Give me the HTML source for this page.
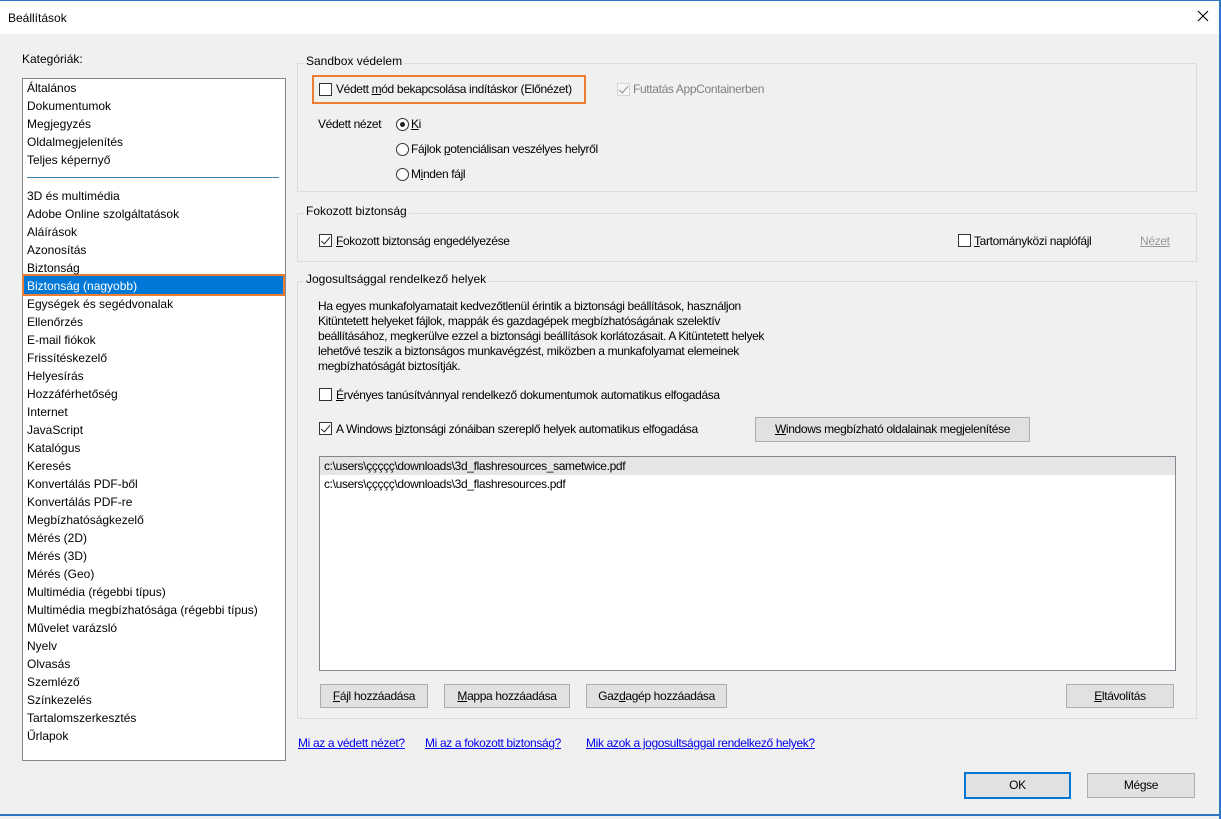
<!DOCTYPE html>
<html><head><meta charset="utf-8"><style>
*{box-sizing:border-box;margin:0;padding:0}
body{width:1221px;height:819px;overflow:hidden;background:#f0f0f0;font-family:"Liberation Sans",sans-serif;font-size:12px;color:#000;position:relative}
.a{position:absolute;white-space:nowrap}
.c{font-size:12px;letter-spacing:-0.35px}
.gb{position:absolute;border:1px solid #dcdcdc}
.gt{position:absolute;background:#f0f0f0;padding:0 2px;top:-10px;left:6px;white-space:nowrap}
.cb{position:absolute;width:13px;height:13px;border:1px solid #333;background:#fff}
.cb.k::after{content:"";position:absolute;left:3px;top:0px;width:4px;height:8px;border:solid #222;border-width:0 1.3px 1.3px 0;transform:rotate(40deg)}
.rb{position:absolute;width:13px;height:13px;border:1px solid #333;border-radius:50%;background:#fff}
.btn{position:absolute;background:#e1e1e1;border:1px solid #adadad;text-align:center;line-height:22px;white-space:nowrap}
.lnk{color:#0000ee;text-decoration:underline}
.li{position:absolute;left:27px;font-size:12px;white-space:nowrap}
</style></head><body>
<div class="a" style="left:0;top:0;width:1221px;height:1px;background:#2b79c2"></div>
<div class="a" style="left:0;top:1px;width:1221px;height:33px;background:#fff"></div>
<div class="a" style="left:8px;top:11px">Beállítások</div>
<svg class="a" style="left:1197px;top:10px" width="12" height="12" viewBox="0 0 12 12"><path d="M1 1L11 11M11 1L1 11" stroke="#000" stroke-width="1.1"/></svg>
<div class="a" style="left:1219px;top:0;width:2px;height:819px;background:#2b79c2"></div>
<div class="a" style="left:0;top:814px;width:1221px;height:2px;background:#2b79c2"></div>

<div class="a" style="left:22px;top:52px">Kategóriák:</div>
<div class="a" style="left:22px;top:78px;width:264px;height:683px;background:#fff;border:1px solid #828790"></div>
<div class="a" style="left:27px;top:177px;width:252px;height:1px;background:#3c7fb1"></div>
<div class="a" style="left:22px;top:274px;width:263px;height:22px;border:2px solid #ed7d31"></div>
<div class="a" style="left:24px;top:276px;width:259px;height:18px;background:#0078d7"></div>

<div class="gb" style="left:297px;top:63px;width:900px;height:129px"><div class="gt">Sandbox védelem</div></div>
<div class="a" style="left:312px;top:75px;width:274px;height:29px;border:2px solid #ed7d31"></div>
<div class="cb" style="left:319px;top:83px"></div>
<div class="a c" style="left:336px;top:82px">Védett <u>m</u>ód bekapcsolása indításkor (Előnézet)</div>
<div class="cb k" style="left:617px;top:83px;border-color:#bbb;opacity:.5"></div>
<div class="a c" style="left:633px;top:82px;color:#808080">Futtatás AppContainerben</div>
<div class="a c" style="left:318px;top:117px">Védett nézet</div>
<div class="rb" style="left:396px;top:118px"><div style="position:absolute;left:3px;top:3px;width:5px;height:5px;border-radius:50%;background:#222"></div></div>
<div class="a c" style="left:411px;top:117px"><u>K</u>i</div>
<div class="rb" style="left:396px;top:143px"></div>
<div class="a c" style="left:411px;top:142px">Fájlok <u>p</u>otenciálisan veszélyes helyről</div>
<div class="rb" style="left:396px;top:168px"></div>
<div class="a c" style="left:411px;top:167px">M<u>i</u>nden fájl</div>

<div class="gb" style="left:297px;top:213px;width:900px;height:49px"><div class="gt">Fokozott biztonság</div></div>
<div class="cb k" style="left:319px;top:234px"></div>
<div class="a c" style="left:336px;top:234px"><u>F</u>okozott biztonság engedélyezése</div>
<div class="cb" style="left:958px;top:234px"></div>
<div class="a c" style="left:974px;top:234px"><u>T</u>artományközi naplófájl</div>
<div class="a c" style="left:1140px;top:234px;color:#999;text-decoration:underline">Nézet</div>

<div class="gb" style="left:297px;top:281px;width:900px;height:438px"><div class="gt">Jogosultsággal rendelkező helyek</div></div>
<div class="a c" style="left:318px;top:299px;line-height:15px">Ha egyes munkafolyamatait kedvezőtlenül érintik a biztonsági beállítások, használjon<br>Kitüntetett helyeket fájlok, mappák és gazdagépek megbízhatóságának szelektív<br>beállításához, megkerülve ezzel a biztonsági beállítások korlátozásait. A Kitüntetett helyek<br>lehetővé teszik a biztonságos munkavégzést, miközben a munkafolyamat elemeinek<br>megbízhatóságát biztosítják.</div>
<div class="cb" style="left:319px;top:388px"></div>
<div class="a c" style="left:336px;top:388px"><u>É</u>rvényes tanúsítvánnyal rendelkező dokumentumok automatikus elfogadása</div>
<div class="cb k" style="left:319px;top:422px"></div>
<div class="a c" style="left:336px;top:422px">A Windows <u>b</u>iztonsági zónáiban szereplő helyek automatikus elfogadása</div>
<div class="btn c" style="left:755px;top:417px;width:275px;height:25px"><u>W</u>indows megbízható oldalainak megjelenítése</div>
<div class="a" style="left:319px;top:456px;width:857px;height:215px;background:#fff;border:1px solid #828790"></div>
<div class="a" style="left:320px;top:457px;width:855px;height:18px;background:#e5e5e5"></div>
<div class="a c" style="left:324px;top:459px">c:\users\ççççç\downloads\3d_flashresources_sametwice.pdf</div>
<div class="a c" style="left:324px;top:477px">c:\users\ççççç\downloads\3d_flashresources.pdf</div>
<div class="btn c" style="left:320px;top:684px;width:108px;height:24px"><u>F</u>ájl hozzáadása</div>
<div class="btn c" style="left:444px;top:684px;width:126px;height:24px"><u>M</u>appa hozzáadása</div>
<div class="btn c" style="left:586px;top:684px;width:141px;height:24px">Gaz<u>d</u>agép hozzáadása</div>
<div class="btn c" style="left:1066px;top:684px;width:108px;height:24px"><u>E</u>ltávolítás</div>

<div class="a c lnk" style="left:298px;top:736px">Mi az a védett nézet?</div>
<div class="a c lnk" style="left:425px;top:736px">Mi az a fokozott biztonság?</div>
<div class="a c lnk" style="left:586px;top:736px">Mik azok a jogosultsággal rendelkező helyek?</div>
<div class="btn c" style="left:964px;top:772px;width:107px;height:27px;border:2px solid #0078d7;line-height:23px">OK</div>
<div class="btn c" style="left:1087px;top:773px;width:108px;height:25px">Mégse</div>

<div style="position:absolute;left:0;top:0">
<div class="li" style="top:81px">Általános</div>
<div class="li" style="top:99px">Dokumentumok</div>
<div class="li" style="top:117px">Megjegyzés</div>
<div class="li" style="top:135px">Oldalmegjelenítés</div>
<div class="li" style="top:153px">Teljes képernyő</div>
<div class="li" style="top:189px">3D és multimédia</div>
<div class="li" style="top:207px">Adobe Online szolgáltatások</div>
<div class="li" style="top:225px">Aláírások</div>
<div class="li" style="top:243px">Azonosítás</div>
<div class="li" style="top:261px">Biztonság</div>
<div class="li" style="top:279px;color:#fff">Biztonság (nagyobb)</div>
<div class="li" style="top:297px">Egységek és segédvonalak</div>
<div class="li" style="top:315px">Ellenőrzés</div>
<div class="li" style="top:333px">E-mail fiókok</div>
<div class="li" style="top:351px">Frissítéskezelő</div>
<div class="li" style="top:369px">Helyesírás</div>
<div class="li" style="top:387px">Hozzáférhetőség</div>
<div class="li" style="top:405px">Internet</div>
<div class="li" style="top:423px">JavaScript</div>
<div class="li" style="top:441px">Katalógus</div>
<div class="li" style="top:459px">Keresés</div>
<div class="li" style="top:477px">Konvertálás PDF-ből</div>
<div class="li" style="top:495px">Konvertálás PDF-re</div>
<div class="li" style="top:513px">Megbízhatóságkezelő</div>
<div class="li" style="top:531px">Mérés (2D)</div>
<div class="li" style="top:549px">Mérés (3D)</div>
<div class="li" style="top:567px">Mérés (Geo)</div>
<div class="li" style="top:585px">Multimédia (régebbi típus)</div>
<div class="li" style="top:603px">Multimédia megbízhatósága (régebbi típus)</div>
<div class="li" style="top:621px">Művelet varázsló</div>
<div class="li" style="top:639px">Nyelv</div>
<div class="li" style="top:657px">Olvasás</div>
<div class="li" style="top:675px">Szemléző</div>
<div class="li" style="top:693px">Színkezelés</div>
<div class="li" style="top:711px">Tartalomszerkesztés</div>
<div class="li" style="top:729px">Űrlapok</div>
</div>
</body></html>
